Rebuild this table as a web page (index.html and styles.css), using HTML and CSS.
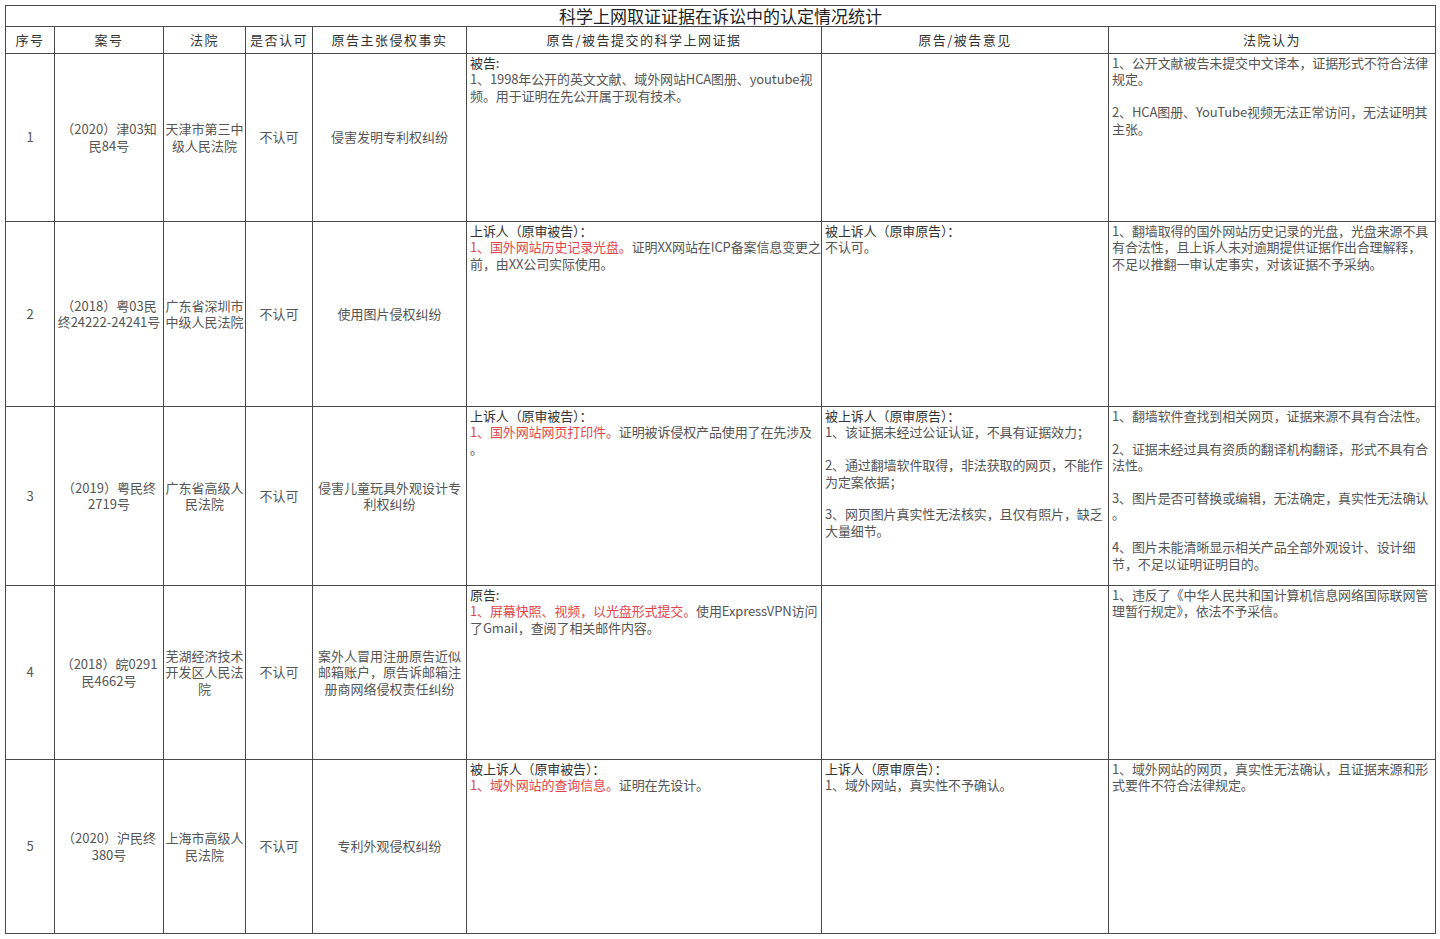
FILE: index.html
```html
<!DOCTYPE html>
<html lang="zh-CN">
<head>
<meta charset="utf-8">
<title>科学上网取证证据在诉讼中的认定情况统计</title>
<link rel="stylesheet" href="styles.css">
</head>
<body>
<table class="sheet">
  <colgroup>
    <col class="c-no"><col class="c-case"><col class="c-court"><col class="c-ok"><col class="c-fact"><col class="c-evid"><col class="c-opin"><col class="c-view">
  </colgroup>
  <tr class="r-title"><td colspan="8" class="title">科学上网取证证据在诉讼中的认定情况统计</td></tr>
  <tr class="r-head">
    <th>序号</th><th>案号</th><th>法院</th><th>是否认可</th><th>原告主张侵权事实</th><th>原告/被告提交的科学上网证据</th><th>原告/被告意见</th><th>法院认为</th>
  </tr>
  <tr class="r1">
    <td class="mid">1</td>
    <td class="mid">（2020）津03知民84号</td>
    <td class="mid">天津市第三中级人民法院</td>
    <td class="mid">不认可</td>
    <td class="mid">侵害发明专利权纠纷</td>
    <td class="top"><div class="lbl">被告:</div>1、1998年公开的英文文献、域外网站HCA图册、youtube视<br>频。用于证明在先公开属于现有技术。</td>
    <td class="top"></td>
    <td class="top"><p>1、公开文献被告未提交中文译本，证据形式不符合法律<br>规定。</p><p>2、HCA图册、YouTube视频无法正常访问，无法证明其<br>主张。</p></td>
  </tr>
  <tr class="r2">
    <td class="mid">2</td>
    <td class="mid">（2018）粤03民<br>终24222-24241号</td>
    <td class="mid">广东省深圳市中级人民法院</td>
    <td class="mid">不认可</td>
    <td class="mid">使用图片侵权纠纷</td>
    <td class="top"><div class="lbl">上诉人（原审被告）：</div><span class="red">1、国外网站历史记录光盘。</span>证明XX网站在ICP备案信息变更之<br>前，由XX公司实际使用。</td>
    <td class="top"><div class="lbl">被上诉人（原审原告）：</div>不认可。</td>
    <td class="top"><p>1、翻墙取得的国外网站历史记录的光盘，光盘来源不具<br>有合法性，且上诉人未对逾期提供证据作出合理解释，<br>不足以推翻一审认定事实，对该证据不予采纳。</p></td>
  </tr>
  <tr class="r3">
    <td class="mid">3</td>
    <td class="mid">（2019）粤民终<br>2719号</td>
    <td class="mid">广东省高级人民法院</td>
    <td class="mid">不认可</td>
    <td class="mid">侵害儿童玩具外观设计专利权纠纷</td>
    <td class="top"><div class="lbl">上诉人（原审被告）：</div><span class="red">1、国外网站网页打印件。</span>证明被诉侵权产品使用了在先涉及<br>。</td>
    <td class="top"><div class="lbl">被上诉人（原审原告）：</div><p>1、该证据未经过公证认证，不具有证据效力；</p><p>2、通过翻墙软件取得，非法获取的网页，不能作<br>为定案依据；</p><p>3、网页图片真实性无法核实，且仅有照片，缺乏<br>大量细节。</p></td>
    <td class="top"><p>1、翻墙软件查找到相关网页，证据来源不具有合法性。</p><p>2、证据未经过具有资质的翻译机构翻译，形式不具有合<br>法性。</p><p>3、图片是否可替换或编辑，无法确定，真实性无法确认<br>。</p><p>4、图片未能清晰显示相关产品全部外观设计、设计细<br>节，不足以证明证明目的。</p></td>
  </tr>
  <tr class="r4">
    <td class="mid">4</td>
    <td class="mid">（2018）皖0291<br>民4662号</td>
    <td class="mid">芜湖经济技术开发区人民法院</td>
    <td class="mid">不认可</td>
    <td class="mid">案外人冒用注册原告近似邮箱账户，原告诉邮箱注册商网络侵权责任纠纷</td>
    <td class="top"><div class="lbl">原告:</div><span class="red">1、屏幕快照、视频，以光盘形式提交。</span>使用ExpressVPN访问<br>了Gmail，查阅了相关邮件内容。</td>
    <td class="top"></td>
    <td class="top"><p>1、违反了《中华人民共和国计算机信息网络国际联网管<br>理暂行规定》，依法不予采信。</p></td>
  </tr>
  <tr class="r5">
    <td class="mid">5</td>
    <td class="mid">（2020）沪民终<br>380号</td>
    <td class="mid">上海市高级人民法院</td>
    <td class="mid">不认可</td>
    <td class="mid">专利外观侵权纠纷</td>
    <td class="top"><div class="lbl">被上诉人（原审被告）：</div><span class="red">1、域外网站的查询信息。</span>证明在先设计。</td>
    <td class="top"><div class="lbl">上诉人（原审原告）：</div>1、域外网站，真实性不予确认。</td>
    <td class="top"><p>1、域外网站的网页，真实性无法确认，且证据来源和形<br>式要件不符合法律规定。</p></td>
  </tr>
</table>
</body>
</html>
```

FILE: styles.css
```css
html, body {
  margin: 0;
  padding: 0;
  background: #ffffff;
}

body {
  padding: 5px 0 0 5px;
  font-family: "Noto Sans CJK SC", "Noto Sans", sans-serif;
  font-size: 13px;
  color: #555555;
}

.sheet {
  border-collapse: collapse;
  table-layout: fixed;
  width: 1431px;
}

.sheet td,
.sheet th {
  border: 1px solid #4a4a4a;
  padding: 0 3px;
  line-height: 16.4px;
  overflow: hidden;
}

.c-no { width: 49px; }
.c-case { width: 109px; }
.c-court { width: 82px; }
.c-ok { width: 67px; }
.c-fact { width: 154px; }
.c-evid { width: 355px; }
.c-opin { width: 287px; }
.c-view { width: 327px; }

.r-title { height: 21px; }
.r-head { height: 27px; }
.r1 { height: 168px; }
.r2 { height: 185px; }
.r3 { height: 179px; }
.r4 { height: 174px; }
.r5 { height: 174px; }

.sheet td.title {
  text-align: center;
  font-size: 17px;
  line-height: 19px;
  color: #222222;
  padding: 0 0 1px 0;
  overflow: visible;
}

.sheet th {
  font-weight: normal;
  font-size: 13px;
  letter-spacing: 1.5px;
  color: #333333;
  text-align: center;
  vertical-align: middle;
}

.sheet td.mid {
  text-align: center;
  vertical-align: middle;
  padding: 0 1px;
}

.sheet td.top {
  text-align: left;
  vertical-align: top;
  padding: 1px 0 0 3px;
  white-space: nowrap;
  letter-spacing: -0.12px;
}

.lbl {
  color: #333333;
}

.red {
  color: #e0474c;
}

.top p {
  margin: 0 0 16.4px 0;
}

.top p:last-child {
  margin-bottom: 0;
}
```
